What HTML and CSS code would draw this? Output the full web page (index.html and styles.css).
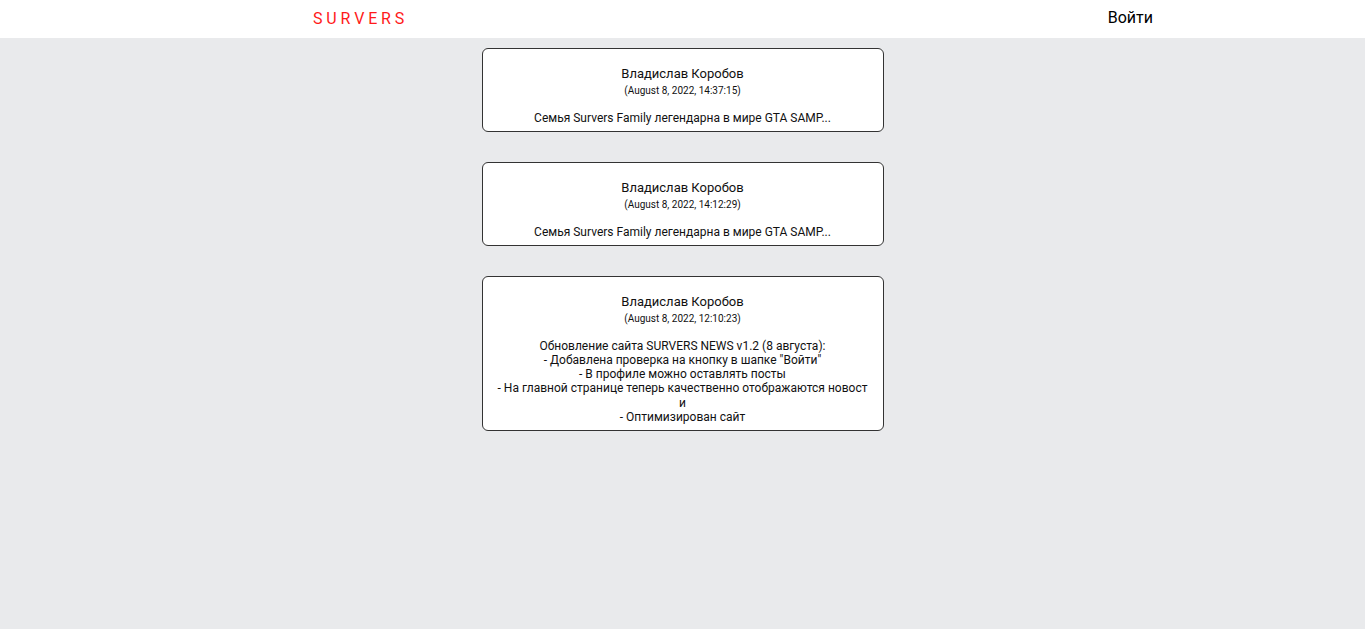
FILE: index.html
```html
<!DOCTYPE html>
<html lang="ru">
<head>
<meta charset="utf-8">
<title>SURVERS</title>
<link rel="stylesheet" href="styles.css">
</head>
<body>
<header class="header">
  <a class="logo" href="#">SURVERS</a>
  <a class="login" href="#">Войти</a>
</header>
<main class="feed">
  <article class="post">
    <div class="post-author">Владислав Коробов</div>
    <div class="post-date">(August 8, 2022, 14:37:15)</div>
    <div class="post-text">Семья Survers Family легендарна в мире GTA SAMP...</div>
  </article>
  <article class="post">
    <div class="post-author">Владислав Коробов</div>
    <div class="post-date">(August 8, 2022, 14:12:29)</div>
    <div class="post-text">Семья Survers Family легендарна в мире GTA SAMP...</div>
  </article>
  <article class="post">
    <div class="post-author">Владислав Коробов</div>
    <div class="post-date">(August 8, 2022, 12:10:23)</div>
    <div class="post-text">Обновление сайта SURVERS NEWS v1.2 (8 августа):<br>- Добавлена проверка на кнопку в шапке "Войти"<br>- В профиле можно оставлять посты<br>- На главной странице теперь качественно отображаются новости<br>- Оптимизирован сайт</div>
  </article>
</main>
</body>
</html>
```

FILE: styles.css
```css
* { box-sizing: border-box; }
html, body { margin: 0; padding: 0; }
body {
  background: #e9eaec;
  font-family: Roboto, "Liberation Sans", sans-serif;
  min-height: 629px;
}
a { text-decoration: none; }
.header {
  height: 38px;
  background: #fff;
  display: flex;
  align-items: center;
  justify-content: space-between;
  padding: 0 212px 0 313px;
}
.logo {
  color: #ff1a1a;
  font-size: 16px;
  letter-spacing: 3.85px;
  margin-bottom: 2px;
}
.login {
  color: #000;
  font-size: 16px;
  margin-bottom: 4px;
}
.feed {
  display: flex;
  flex-direction: column;
  align-items: center;
  gap: 30px;
  padding-top: 10px;
}
.post {
  width: 402px;
  background: #fff;
  border: 1px solid #333;
  border-radius: 6px;
  padding: 17px 15px 6px;
  text-align: center;
  color: #111;
}
.post-author {
  font-size: 13px;
  line-height: 15px;
}
.post-date {
  font-size: 10px;
  line-height: 12px;
  margin-top: 4px;
}
.post-text {
  font-size: 12px;
  line-height: 14.1px;
  margin-top: 14px;
  word-break: break-all;
}
```
